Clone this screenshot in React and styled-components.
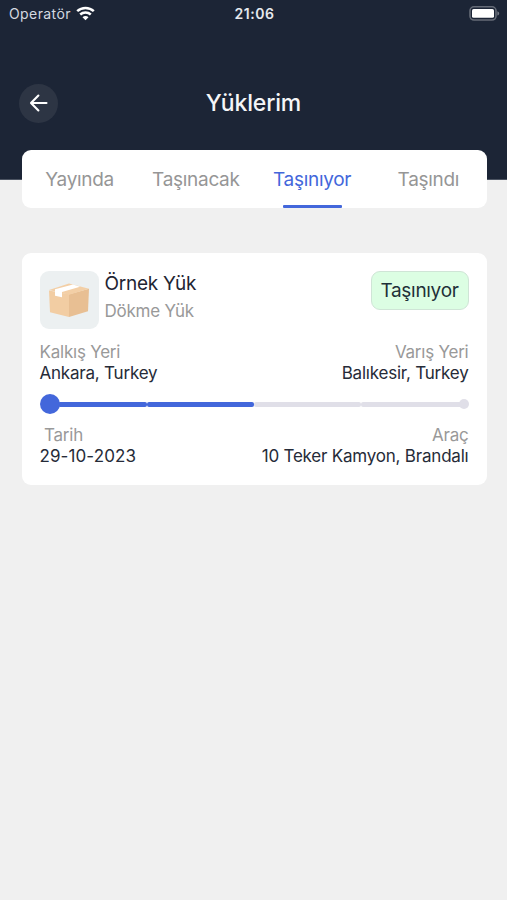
import React, {useState} from 'react';
import styled, {createGlobalStyle} from "styled-components";

const GlobalStyle = createGlobalStyle`
  * {
    box-sizing: border-box;
  }

  body {
    margin: 0;
    background-color: #f0f0f0;
    font-family: Inter, "Liberation Sans", sans-serif;
  }
`;

const Screen = styled.div`
  min-height: 900px;
  background-color: #f0f0f0;
`;

const Header = styled.header`
  height: 180px;
  background-color: #1c2536;
  border-bottom: 1px solid #4b5361;
`;

const StatusBar = styled.div`
  display: grid;
  grid-template-columns: 1fr auto 1fr;
  align-items: center;
  height: 26px;
  padding: 0 7px 0 9px;
  color: #e6e9ee;
  font-size: 14px;
`;

const Carrier = styled.div`
  display: flex;
  align-items: center;
  gap: 5px;
  color: #d5d9e0;
  letter-spacing: 0.4px;
`;

const Clock = styled.span`
  padding-top: 1px;
  font-weight: 600;
  letter-spacing: 0.5px;
`;

const BatteryIcon = styled.svg`
  justify-self: end;
`;

const TitleBar = styled.div`
  display: grid;
  grid-template-columns: 39px 1fr 39px;
  align-items: center;
  height: 40px;
  margin-top: 57px;
  padding: 0 19px;
`;

const BackButton = styled.button`
  display: flex;
  align-items: center;
  justify-content: center;
  width: 39px;
  height: 39px;
  padding: 0;
  border: none;
  border-radius: 50%;
  background-color: #2d3544;
`;

const Title = styled.h1`
  margin: 0;
  color: #f5f6f8;
  font-size: 23px;
  font-weight: 500;
  letter-spacing: -0.15px;
  line-height: 28px;
  text-align: center;
`;

const Tabs = styled.nav`
  display: flex;
  height: 58px;
  margin: -30px 20.5px 0 21.5px;
  border-radius: 9px;
  background-color: #fff;
`;

const Tab = styled.button`
  display: flex;
  flex: 1 1 0;
  flex-direction: column;
  align-items: center;
  justify-content: space-between;
  padding: 18px 0 0;
  border: none;
  background: none;
  color: ${({$active}) => $active ? "#4367db" : "#969696"};
  font-family: inherit;
  font-size: 19px;
  letter-spacing: -0.3px;
  line-height: 24px;

  &::after {
    content: "";
    width: 59px;
    height: 3px;
    border-radius: 1px;
    background-color: ${({$active}) => $active ? "#4367db" : "transparent"};
  }
`;

const Card = styled.article`
  height: 232px;
  margin: 45px 20.5px 0 21.5px;
  padding: 18px 18px 0;
  border-radius: 9px;
  background-color: #fff;
`;

const CardTop = styled.div`
  display: flex;
  align-items: flex-start;
  margin-bottom: 13px;
`;

const Thumb = styled.div`
  display: flex;
  align-items: center;
  justify-content: center;
  width: 59px;
  height: 58px;
  border-radius: 9px;
  background-color: #ecf0f1;
`;

const Names = styled.div`
  flex: 1;
  padding-left: 6px;
`;

const Name = styled.div`
  color: #1f2533;
  font-size: 19px;
  letter-spacing: -0.25px;
  line-height: 25px;
`;

const Kind = styled.div`
  margin-top: 4px;
  color: #999;
  font-size: 17px;
  letter-spacing: -0.25px;
  line-height: 22px;
`;

const Badge = styled.span`
  width: 98px;
  height: 39px;
  border: 1px solid #cfe5d6;
  border-radius: 9px;
  background-color: #dcfee3;
  color: #1f3038;
  font-size: 19px;
  letter-spacing: -0.3px;
  line-height: 37px;
  text-align: center;
`;

const Pair = styled.div`
  display: flex;
  justify-content: space-between;
`;

const Field = styled.div`
  display: flex;
  flex-direction: column;
  align-items: ${({$end}) => $end ? "flex-end" : "flex-start"};
`;

const Label = styled.span`
  padding-left: ${({$indent}) => $indent || 0}px;
  color: #999;
  font-size: 17px;
  letter-spacing: -0.23px;
  line-height: 21px;
`;

const Value = styled.span`
  color: #262b38;
  font-size: 17px;
  letter-spacing: ${({$numeric}) => $numeric ? "0.1px" : "-0.21px"};
  line-height: 21px;
`;

const Route = styled.div`
  display: flex;
  align-items: center;
  height: 20px;
  margin: 10px 0 11px;
`;

const Start = styled.span`
  width: 20px;
  height: 20px;
  border-radius: 50%;
  background-color: #4367db;
`;

const Step = styled.span`
  flex: ${({$grow}) => $grow} 1 0;
  height: 5px;
  margin-left: ${({$first}) => $first ? "-2px" : "0"};
  border-radius: 2px;
  background-color: ${({$done}) => $done ? "#4367db" : "#e0dfe8"};
`;

const End = styled.span`
  width: 10px;
  height: 10px;
  margin-left: -5px;
  border-radius: 50%;
  background-color: #e0dfe8;
`;

const Wifi = () => (
  <svg width="19" height="15" viewBox="0 0 19 15" fill="none" stroke="#fff" strokeWidth="2.5">
    <path d="M1.2 5.2C5.8.9 13.2.9 17.8 5.2"/>
    <path d="M4.2 8.5C7.2 5.7 11.8 5.7 14.8 8.5"/>
    <path d="M9.5 14.2 6.5 11.2C8.1 9.7 10.9 9.7 12.5 11.2Z" fill="#fff" stroke="none"/>
  </svg>
);

const Battery = () => (
  <BatteryIcon width="31" height="15" viewBox="0 0 31 15">
    <rect x="1" y="0.8" width="26" height="13.2" rx="4" fill="none" stroke="#656b77" strokeWidth="1.6"/>
    <rect x="3" y="3" width="22" height="8.8" rx="1.6" fill="#fff"/>
    <path d="M28.4 5.2C30.8 6 30.8 8.8 28.4 9.6Z" fill="#767b86"/>
  </BatteryIcon>
);

const BackArrow = () => (
  <svg width="20" height="20" viewBox="0 0 20 20" fill="none" stroke="#fff" strokeWidth="2.1" strokeLinecap="round" strokeLinejoin="round">
    <path d="M17.5 10H2.4M9.4 2.6 2 10 9.4 17.4"/>
  </svg>
);

const Box = () => (
  <svg width="40" height="34" viewBox="0 0 40 36" preserveAspectRatio="none">
    <path d="M0 8 20 12V36L1 31Z" fill="#f2cda3"/>
    <path d="M20 12 40 6 39 30 20 36Z" fill="#e8bf93"/>
    <path d="M0 7.5 20 .5 40 6 20 12.5Z" fill="#f3cfa6"/>
    <path d="M6 6.5 24 1.5 31 4 13 9.5V15L6 13.5Z" fill="#fff"/>
  </svg>
);

const steps = [
  {grow: 89, done: true},
  {grow: 107, done: true},
  {grow: 107, done: false},
  {grow: 103, done: false},
];

const tabs = ["Yayında", "Taşınacak", "Taşınıyor", "Taşındı"];

const App = () => {
  const [active, setActive] = useState("Taşınıyor");

  return (
    <Screen>
      <GlobalStyle/>
      <Header>
        <StatusBar>
          <Carrier>Operatör<Wifi/></Carrier>
          <Clock>21:06</Clock>
          <Battery/>
        </StatusBar>
        <TitleBar>
          <BackButton><BackArrow/></BackButton>
          <Title>Yüklerim</Title>
        </TitleBar>
      </Header>
      <Tabs>
        {tabs.map((tab) => (
          <Tab key={tab} $active={tab === active} onClick={() => setActive(tab)}>{tab}</Tab>
        ))}
      </Tabs>
      <Card>
        <CardTop>
          <Thumb><Box/></Thumb>
          <Names>
            <Name>Örnek Yük</Name>
            <Kind>Dökme Yük</Kind>
          </Names>
          <Badge>Taşınıyor</Badge>
        </CardTop>
        <Pair>
          <Field>
            <Label>Kalkış Yeri</Label>
            <Value>Ankara, Turkey</Value>
          </Field>
          <Field $end>
            <Label>Varış Yeri</Label>
            <Value>Balıkesir, Turkey</Value>
          </Field>
        </Pair>
        <Route>
          <Start/>
          {steps.map((step, i) => (
            <Step key={i} $grow={step.grow} $done={step.done} $first={i === 0}/>
          ))}
          <End/>
        </Route>
        <Pair>
          <Field>
            <Label $indent={4.5}>Tarih</Label>
            <Value $numeric>29-10-2023</Value>
          </Field>
          <Field $end>
            <Label>Araç</Label>
            <Value>10 Teker Kamyon, Brandalı</Value>
          </Field>
        </Pair>
      </Card>
    </Screen>
  );
};

export default App;
